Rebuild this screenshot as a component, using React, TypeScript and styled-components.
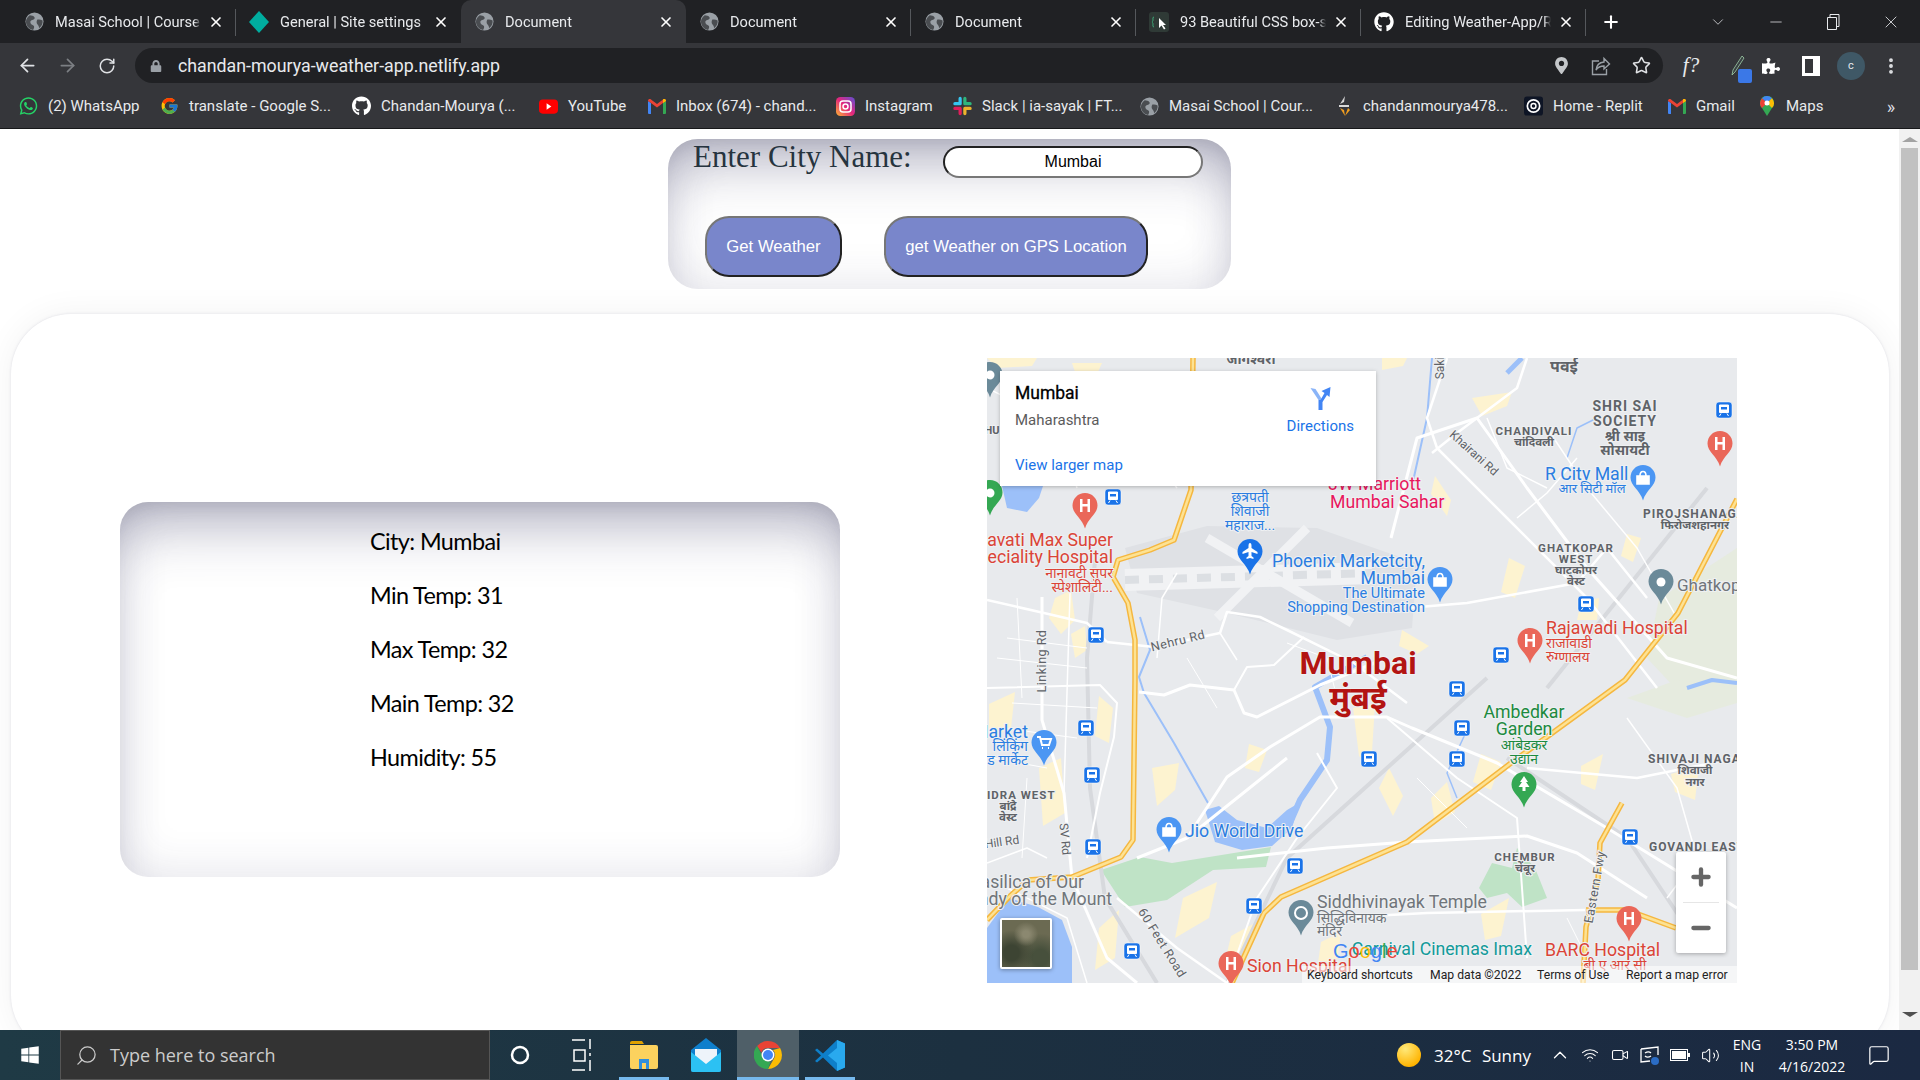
import React from "react";
import styled, { createGlobalStyle } from "styled-components";
import {
  ArrowLeft,
  ArrowRight,
  RotateCw,
  Star,
  Plus,
  X,
  Minus,
  ChevronDown,
  ChevronUp,
  Search,
  MoreVertical,
  Wifi,
  Volume2,
  Video,
  MessageSquare,
} from "lucide-react";
import { FaWhatsapp, FaGithub, FaWindows, FaPuzzlePiece, FaLock, FaMapMarkerAlt } from "react-icons/fa";
import { FcGoogle } from "react-icons/fc";

const GlobalStyle = createGlobalStyle`
  html, body { margin: 0; padding: 0; overflow: hidden; background: #fff; }
  * { box-sizing: border-box; }
`;

const UI_FONT = `Roboto, "Noto Sans", "Liberation Sans", sans-serif`;
const DEVA = `Roboto, "Noto Sans", "Noto Sans Devanagari", "Liberation Sans", sans-serif`;

const Screen = styled.div`
  width: 1920px;
  height: 1080px;
  display: flex;
  flex-direction: column;
  overflow: hidden;
  font-family: ${UI_FONT};
`;

/* browser chrome */
const TabStrip = styled.div`
  height: 43px;
  flex: none;
  background: #202124;
  display: flex;
  align-items: stretch;
  padding-left: 11px;
  color: #e8eaed;
`;

const Tab = styled.div<{ $active?: boolean; $sep?: boolean }>`
  position: relative;
  width: 225px;
  flex: none;
  display: flex;
  align-items: center;
  padding-left: 13px;
  font-size: 14.6px;
  background: ${(p) => (p.$active ? "#35363a" : "transparent")};
  border-radius: ${(p) => (p.$active ? "10px 10px 0 0" : "0")};
  &::after {
    content: "";
    display: ${(p) => (p.$sep ? "block" : "none")};
    position: absolute;
    right: 0;
    top: 9px;
    bottom: 7px;
    width: 1px;
    background: #55585c;
  }
`;

const TabIcon = styled.span`
  width: 20px;
  height: 20px;
  display: flex;
  align-items: center;
  justify-content: center;
  flex: none;
`;

const TabTitle = styled.span`
  margin-left: 11px;
  width: 146px;
  white-space: nowrap;
  overflow: hidden;
  -webkit-mask-image: linear-gradient(to right, #000 95%, transparent);
`;

const TabClose = styled.span`
  margin-left: 7px;
  display: flex;
  color: #fff;
`;

const NewTab = styled.span`
  margin-left: 15px;
  display: flex;
  align-items: center;
  color: #fff;
`;

const WindowControls = styled.div`
  margin-left: auto;
  display: flex;
  align-items: center;
  color: #e8eaed;
`;

const WinButton = styled.span<{ $w: number }>`
  width: ${(p) => p.$w}px;
  display: flex;
  justify-content: center;
`;

const Toolbar = styled.div`
  height: 41px;
  flex: none;
  background: #35363a;
  display: flex;
  align-items: center;
  padding: 4px 0 0 7px;
  color: #dadce0;
`;

const NavButton = styled.span<{ $w?: number; $dim?: boolean }>`
  width: ${(p) => p.$w ?? 40}px;
  flex: none;
  display: flex;
  justify-content: center;
  align-items: center;
  color: ${(p) => (p.$dim ? "#7c7f83" : "#e0e2e5")};
`;

const Omnibox = styled.div`
  width: 1528px;
  height: 35px;
  margin-left: 8px;
  flex: none;
  border-radius: 18px;
  background: #202124;
  display: flex;
  align-items: center;
  padding: 0 2px 0 15px;
  color: #9aa0a6;
`;

const UrlText = styled.span`
  margin-left: 16px;
  font-size: 17.8px;
  color: #e8eaed;
`;

const OmniActions = styled.div`
  margin-left: auto;
  display: flex;
  color: #c4c7ca;
`;

const Avatar = styled.span`
  width: 28px;
  height: 28px;
  border-radius: 50%;
  background: #3f5866;
  color: #e8eaed;
  font-size: 11px;
  display: flex;
  align-items: center;
  justify-content: center;
`;

const FxMark = styled.span`
  font-family: "Liberation Serif", serif;
  font-style: italic;
  font-size: 21px;
  color: #e8eaed;
`;

const ExtBadge = styled.span`
  position: relative;
  display: flex;
  &::after {
    content: "";
    position: absolute;
    left: 9px;
    bottom: -7px;
    width: 14px;
    height: 14px;
    border-radius: 2px;
    background: #3b78e7;
  }
`;

const BookmarkBar = styled.div`
  height: 45px;
  flex: none;
  background: #35363a;
  border-bottom: 1px solid #17181a;
  display: flex;
  align-items: center;
  padding-left: 19px;
  font-size: 15px;
  color: #e8eaed;
`;

const Bookmark = styled.div<{ $w: number }>`
  width: ${(p) => p.$w}px;
  flex: none;
  display: flex;
  align-items: center;
  gap: 10px;
  white-space: nowrap;
`;

const BookmarkIcon = styled.span`
  width: 19px;
  height: 20px;
  display: flex;
  align-items: center;
  justify-content: center;
  flex: none;
`;

const MoreBookmarks = styled.span`
  margin-left: auto;
  width: 66px;
  padding-left: 8px;
  text-align: center;
  font-size: 18px;
  color: #dadce0;
`;

/* page */
const Viewport = styled.div`
  flex: 1;
  min-height: 0;
  display: flex;
`;

const Page = styled.main`
  flex: 1;
  overflow: hidden;
  background: #fff;
  padding-top: 10px;
`;

const Scrollbar = styled.div`
  width: 21px;
  flex: none;
  background: #f1f1f1;
  display: flex;
  flex-direction: column;
  align-items: center;
  padding-top: 8px;
`;

const ScrollThumb = styled.div`
  width: 17px;
  height: 822px;
  margin: 6px 0 42px;
  background: #c1c1c1;
`;

const ScrollArrow = styled.div<{ $down?: boolean }>`
  width: 0;
  height: 0;
  border-left: 8px solid transparent;
  border-right: 8px solid transparent;
  ${(p) => (p.$down ? "border-top: 5px solid #505050;" : "border-bottom: 5px solid #a3a3a3;")}
`;

const InsetShadow = `
  box-shadow: inset 0 46px 56px -20px rgba(50, 50, 93, 0.3),
    inset 0 14px 22px -14px rgba(0, 0, 0, 0.12),
    inset 0 0 48px rgba(50, 50, 93, 0.15);
`;

const FormCard = styled.form`
  width: 563px;
  height: 150px;
  margin: 0 auto;
  border-radius: 30px;
  ${InsetShadow}
  padding: 7px 28px 0 25px;
`;

const CityRow = styled.div`
  display: flex;
  align-items: flex-start;
`;

const CityLabel = styled.label`
  font-family: "Liberation Serif", serif;
  font-size: 31px;
  line-height: 36px;
  margin-top: -7px;
  color: #26343f;
`;

const CityInput = styled.input`
  margin-left: auto;
  width: 260px;
  height: 32px;
  border-radius: 16px;
  border: 2px solid;
  border-color: #222 #777 #777 #222;
  background: #fff;
  text-align: center;
  font-family: "Liberation Sans", sans-serif;
  font-size: 16px;
  color: #000;
  outline: none;
`;

const ButtonRow = styled.div`
  display: flex;
  gap: 42px;
  margin-top: 38px;
  padding-left: 12px;
`;

const ActionButton = styled.button<{ $w: number }>`
  width: ${(p) => p.$w}px;
  height: 61px;
  border-radius: 24px;
  border: 2px solid;
  border-color: #767676 #222 #222 #767676;
  background: #7986cb;
  color: #fff;
  font-family: "Liberation Sans", sans-serif;
  font-size: 16.7px;
  padding: 0;
`;

const MainCard = styled.section`
  width: 1878px;
  height: 741px;
  margin: 25px 0 0 11px;
  border-radius: 60px;
  background: #fff;
  box-shadow: 0 0 34px rgba(0, 0, 0, 0.055), 0 0 3px rgba(50, 50, 93, 0.13);
  display: flex;
  align-items: flex-start;
  gap: 147px;
  padding: 44px 0 0 109px;
`;

const WeatherCard = styled.div`
  width: 720px;
  height: 375px;
  margin-top: 144px;
  border-radius: 28px;
  ${InsetShadow}
  padding: 13px 0 0 250px;
`;

const WeatherRow = styled.p`
  margin: 0;
  height: 54px;
  line-height: 52px;
  font-family: Lato, "Open Sans", sans-serif;
  font-size: 23.4px;
  letter-spacing: -0.6px;
  color: #000;
`;

/* map */
const MapFrame = styled.div`
  position: relative;
  width: 750px;
  height: 625px;
  flex: none;
  overflow: hidden;
  background: #e8eaed;
  font-family: Roboto, sans-serif;
`;

const MapSvg = styled.svg`
  display: block;
`;

const InfoCard = styled.div`
  position: absolute;
  left: 13px;
  top: 13px;
  width: 376px;
  height: 115px;
  background: #fff;
  padding: 12px 15px;
  box-shadow: 0 1px 4px rgba(0, 0, 0, 0.25);
`;

const InfoTop = styled.div`
  display: flex;
  justify-content: space-between;
  height: 64px;
`;

const InfoName = styled.div`
  font-size: 17.5px;
  font-weight: 400;
  -webkit-text-stroke: 0.3px #000;
  line-height: 20px;
  color: #000;
`;

const InfoRegion = styled.div`
  font-size: 15px;
  margin-top: 8px;
  color: #5b5b5b;
`;

const DirectionsLink = styled.a`
  display: flex;
  flex-direction: column;
  align-items: center;
  font-size: 15px;
  color: #1a73e8;
  gap: 6px;
  margin-right: 7px;
  margin-top: 4px;
`;

const LargerMapLink = styled.a`
  display: block;
  margin-top: 9px;
  font-size: 15px;
  color: #1a73e8;
`;

const ZoomControl = styled.div`
  position: absolute;
  left: 689px;
  top: 494px;
  width: 50px;
  height: 101px;
  background: #fff;
  border-radius: 2px;
  box-shadow: 0 1px 4px rgba(0, 0, 0, 0.3);
  display: flex;
  flex-direction: column;
  color: #666;
`;

const ZoomButton = styled.span`
  flex: 1;
  display: flex;
  align-items: center;
  justify-content: center;
`;

const ZoomDivider = styled.span`
  height: 1px;
  margin: 0 7px;
  background: #e6e6e6;
`;

const SatelliteTile = styled.div`
  position: absolute;
  left: 13px;
  top: 560px;
  width: 52px;
  height: 51px;
  border: 2px solid #fff;
  border-radius: 2px;
  box-shadow: 0 1px 4px rgba(0, 0, 0, 0.35);
  overflow: hidden;
  background: radial-gradient(circle at 50% 30%, #8b8870 0 8%, transparent 30%),
    radial-gradient(circle at 20% 70%, #3d4433 0 15%, transparent 45%),
    radial-gradient(circle at 80% 80%, #47503c 0 15%, transparent 45%),
    #6b6a52;
`;

const Attribution = styled.div`
  position: absolute;
  right: 0;
  bottom: 0;
  height: 17px;
  width: 435px;
  display: flex;
  align-items: center;
  background: rgba(255, 255, 255, 0.55);
  font-size: 12.2px;
  color: #222;
  white-space: nowrap;
`;

const AttributionItem = styled.span<{ $w: number }>`
  width: ${(p) => p.$w}px;
  padding-left: 5px;
  flex: none;
`;

const MapLabel = styled.text<{ $color: string; $size: number; $bold?: boolean }>`
  font-family: ${DEVA};
  font-size: ${(p) => p.$size}px;
  font-weight: ${(p) => (p.$bold ? 700 : 400)};
  fill: ${(p) => p.$color};
  stroke: #eef0f2;
  stroke-width: 2.2px;
  paint-order: stroke;
`;

const GoogleMark = styled.text`
  font-family: "Liberation Sans", sans-serif;
  font-size: 20px;
  font-weight: 400;
`;

/* taskbar */
const Taskbar = styled.footer`
  height: 50px;
  flex: none;
  display: flex;
  align-items: stretch;
  background: linear-gradient(to right, #1f3a45, #1c3040 50%, #1b2942);
  color: #fff;
`;

const StartButton = styled.span`
  width: 60px;
  flex: none;
  display: flex;
  align-items: center;
  justify-content: center;
`;

const SearchBox = styled.div`
  width: 430px;
  flex: none;
  background: #333;
  border: 1px solid #555;
  display: flex;
  align-items: center;
  padding-left: 14px;
  gap: 12px;
  font-family: "Open Sans", sans-serif;
  font-size: 18px;
  color: #ccc;
`;

const TaskSlot = styled.span<{ $w?: number; $open?: boolean; $current?: boolean }>`
  position: relative;
  width: ${(p) => p.$w ?? 62}px;
  flex: none;
  display: flex;
  align-items: center;
  justify-content: center;
  background: ${(p) => (p.$current ? "#4f5f68" : "transparent")};
  &::after {
    content: "";
    display: ${(p) => (p.$open ? "block" : "none")};
    position: absolute;
    bottom: 0;
    left: ${(p) => (p.$current ? "0" : "6px")};
    right: ${(p) => (p.$current ? "0" : "6px")};
    height: 3px;
    background: #76b9ed;
  }
`;

const Tray = styled.div`
  margin-left: auto;
  display: flex;
  align-items: center;
  padding-right: 22px;
  font-family: "Open Sans", sans-serif;
`;

const Sun = styled.span`
  width: 24px;
  height: 24px;
  border-radius: 50%;
  background: radial-gradient(circle at 35% 25%, #ffe97a, #ffb300 75%);
`;

const WeatherText = styled.span`
  margin: 0 14px 0 13px;
  font-size: 17px;
  word-spacing: 6px;
  color: #fff;
`;

const TrayIcon = styled.span<{ $w?: number }>`
  width: ${(p) => p.$w ?? 30}px;
  display: flex;
  justify-content: center;
  color: #fff;
`;

const TrayText = styled.span<{ $w: number; $gap?: number }>`
  width: ${(p) => p.$w}px;
  margin-left: ${(p) => p.$gap ?? 0}px;
  display: flex;
  flex-direction: column;
  align-items: center;
  gap: 3px;
  font-size: 14px;
  line-height: 19px;
  color: #fff;
`;

const GlobeIcon: React.FC = () => (
  <svg width="19" height="19" viewBox="0 0 20 20">
    <circle cx="10" cy="10" r="9.5" fill="#9aa0a6" />
    <path d="M5 3.5c2 .5 4 .5 5 2s-1 2.5-2.5 3S5 10 6 12s3 1.5 3.5 3-.5 3-1 4C4 18 1 14.500 1 10c0-2.500 2-5 4-6.500zM13 8c2-.5 4 0 5.500 1 .5 3-1 6-3.500 8-.5-2-1-3-2-4s-1-3.500 0-5z" fill="#4a4d51" />
  </svg>
);

const DiamondIcon: React.FC = () => (
  <svg width="20" height="22" viewBox="0 0 20 22">
    <path d="M10 0l10 11-10 11L0 11z" fill="#00ad9f" />
  </svg>
);

const CssIcon: React.FC = () => (
  <svg width="20" height="20" viewBox="0 0 20 20">
    <rect width="20" height="20" rx="3" fill="#2f3a36" />
    <path d="M5 5c-1.500 0-1 2-1 3s-1 2-1 2 1 1 1 2-.5 3 1 3" stroke="#3fae7c" fill="none" />
    <path d="M10 6l0 10 2.500-2.500 2.500 4 1.500-1-2.500-3.500h3z" fill="#fff" />
  </svg>
);

const GmailIcon: React.FC = () => (
  <svg width="18" height="15" viewBox="0 0 18 15">
    <path d="M0 2l3 2v11H1a1 1 0 0 1-1-1z" fill="#4285f4" />
    <path d="M18 2l-3 2v11h2a1 1 0 0 0 1-1z" fill="#34a853" />
    <path d="M0 2c0-2 2-2.500 3-1.500L9 5l6-4.500c1-1 3-.5 3 1.500l-3 2-6 4.500L3 4z" fill="#ea4335" />
    <path d="M15 .5c1-1 3-.5 3 1.500l-3 2z" fill="#fbbc04" />
  </svg>
);

const YoutubeIcon: React.FC = () => (
  <svg width="20" height="15" viewBox="0 0 20 15">
    <rect width="20" height="15" rx="4" fill="#f00" />
    <path d="M8 4l5 3.500-5 3.500z" fill="#fff" />
  </svg>
);

const InstagramIcon: React.FC = () => (
  <svg width="19" height="19" viewBox="0 0 19 19">
    <defs>
      <linearGradient id="ig" x1="0" y1="1" x2="1" y2="0">
        <stop offset="0" stopColor="#fdb432" />
        <stop offset=".5" stopColor="#e5267c" />
        <stop offset="1" stopColor="#5b51d8" />
      </linearGradient>
    </defs>
    <rect width="19" height="19" rx="4.500" fill="url(#ig)" />
    <rect x="4" y="4" width="11" height="11" rx="3" fill="none" stroke="#fff" strokeWidth="1.500" />
    <circle cx="9.500" cy="9.500" r="2.500" fill="none" stroke="#fff" strokeWidth="1.500" />
  </svg>
);

const SlackIcon: React.FC = () => (
  <svg width="20" height="20" viewBox="0 0 20 20" strokeWidth="3.400" strokeLinecap="round">
    <path d="M7.500 2v5.500M2 7.500h5" stroke="#36c5f0" />
    <path d="M12.500 2v5.500M18 7.500h-5" stroke="#2eb67d" />
    <path d="M12.500 18v-5.500M18 12.500h-5" stroke="#ecb22e" />
    <path d="M7.500 18v-5.500M2 12.500h5" stroke="#e01e5a" />
  </svg>
);

const ForkIcon: React.FC = () => (
  <svg width="23" height="24" viewBox="0 0 20 24">
    <path d="M8 13v10h4V13z" fill="#4285f4" />
    <path d="M0 1l8 12h4L5 2z" fill="#8ab4f8" />
    <path d="M10 13l4-7-3-2 9-4-1 10-2.500-2L12 15z" fill="#4285f4" />
  </svg>
);

const ShareIcon: React.FC = () => (
  <svg width="20" height="20" viewBox="0 0 20 20" fill="none" stroke="#9aa0a6" strokeWidth="1.400">
    <path d="M8 5H1.500v13.500h14V13" />
    <path d="M5 14c.5-5 3.500-7.500 8-8V2.500l5.500 5.500-5.500 5V10c-3.500 0-6 1-8 4z" />
  </svg>
);

const ReplitIcon: React.FC = () => (
  <svg width="20" height="20" viewBox="0 0 20 20">
    <rect width="20" height="20" rx="3" fill="#0e1525" />
    <circle cx="10" cy="10" r="6.500" fill="none" stroke="#fff" strokeWidth="1.800" />
    <circle cx="10" cy="10" r="2.600" fill="none" stroke="#fff" strokeWidth="1.500" />
  </svg>
);

const GitIcon: React.FC = () => (
  <svg width="14" height="20" viewBox="0 0 14 20">
    <path d="M8 0L3 8l4-2z" fill="#d9d9d9" />
    <path d="M2 9h10v2H2z" fill="#d9d9d9" />
    <path d="M3 12l5 8-1-6z" fill="#f29e1f" />
    <path d="M11 12l-3 8 5-6z" fill="#f29e1f" />
  </svg>
);

const MapsIcon: React.FC = () => (
  <svg width="14" height="20" viewBox="0 0 14 20">
    <path d="M7 0a7 7 0 0 1 5 12L7 20 2 12A7 7 0 0 1 7 0z" fill="#34a853" />
    <path d="M2 2.200A7 7 0 0 1 7 0a7 7 0 0 1 5 2.200L7 7z" fill="#4285f4" />
    <path d="M12 2.200A7 7 0 0 1 12 12L7 7z" fill="#fbbc04" />
    <path d="M2 12a7 7 0 0 1 0-9.800L7 7z" fill="#ea4335" />
    <circle cx="7" cy="7" r="2.500" fill="#fff" />
  </svg>
);

const ChromeIcon: React.FC = () => (
  <svg width="28" height="28" viewBox="0 0 28 28">
    <path d="M14 0a14 14 0 0 1 12.100 7H14a7 7 0 0 0-6.600 4.600L3.100 5A14 14 0 0 1 14 0z" fill="#ea4335" />
    <path d="M26.100 7A14 14 0 0 1 14 28l6-10.500A7 7 0 0 0 19 9z" fill="#fbbc04" />
    <path d="M14 28A14 14 0 0 1 3.100 5l5.500 10.500a7 7 0 0 0 8 5z" fill="#34a853" />
    <circle cx="14" cy="14" r="6.500" fill="#fff" />
    <circle cx="14" cy="14" r="5" fill="#4285f4" />
  </svg>
);

const VsCodeIcon: React.FC = () => (
  <svg width="30" height="31" viewBox="0 0 30 31">
    <path d="M22 0l8 3.500v24L22 31 8 17.500 2 22.500 0 21l6-5.500L0 10l2-1.500 6 5z" fill="#0e7fc9" />
    <path d="M22 0l8 3.500v24L22 31zM22 8l-9 7.500 9 7.500z" fill="#29a9ee" fillRule="evenodd" />
  </svg>
);

const ExplorerIcon: React.FC = () => (
  <svg width="28" height="28" viewBox="0 0 28 28">
    <path d="M0 2a2 2 0 0 1 2-2h10l2 3H0z" fill="#e0a100" />
    <path d="M0 4h26a2 2 0 0 1 2 2v20a2 2 0 0 1-2 2H2a2 2 0 0 1-2-2z" fill="#fcd25e" />
    <path d="M9 28V18h10v10h-3v-6h-4v6z" fill="#2f8fdc" />
  </svg>
);

const MailIcon: React.FC = () => (
  <svg width="30" height="34" viewBox="0 0 30 34">
    <path d="M15 0l15 12v20a2 2 0 0 1-2 2H2a2 2 0 0 1-2-2V12z" fill="#0f7fcc" />
    <path d="M4 11h22v8l-11 8-11-8z" fill="#eef4fa" />
    <path d="M0 14l15 12 15-12v18a2 2 0 0 1-2 2H2a2 2 0 0 1-2-2z" fill="#2cc1f3" />
  </svg>
);

const TaskViewIcon: React.FC = () => (
  <svg width="20" height="34" viewBox="0 0 20 34" fill="none" stroke="#fff" strokeWidth="1.500">
    <path d="M0 2h13M0 32h13M2 12h11v11H2zM18 1v10M18 15v3M18 22v11" />
  </svg>
);

const CastIcon: React.FC = () => (
  <svg width="20" height="20" viewBox="0 0 20 20" fill="none" stroke="#fff" strokeWidth="1.300">
    <path d="M1 4l17-2v8M1 4v13l9-1" />
    <path d="M5 8c3-2 5-1 6 0M11 11c-3 2-5 1-6 0" />
    <circle cx="15" cy="16" r="4" fill="#2b6cc4" stroke="none" />
  </svg>
);

const BatteryIcon: React.FC = () => (
  <svg width="20" height="12" viewBox="0 0 20 12">
    <rect x=".5" y=".5" width="17" height="11" fill="none" stroke="#fff" />
    <rect x="2" y="2" width="14" height="8" fill="#fff" />
    <rect x="18" y="4" width="2" height="4" fill="#fff" />
  </svg>
);

type TabData = { title: string; icon: React.ReactNode; active?: boolean; sep?: boolean };

const tabs: TabData[] = [
  { title: "Masai School | Course", icon: <GlobeIcon />, sep: true },
  { title: "General | Site settings", icon: <DiamondIcon /> },
  { title: "Document", icon: <GlobeIcon />, active: true },
  { title: "Document", icon: <GlobeIcon />, sep: true },
  { title: "Document", icon: <GlobeIcon />, sep: true },
  { title: "93 Beautiful CSS box-shadow", icon: <CssIcon />, sep: true },
  { title: "Editing Weather-App/README", icon: <FaGithub size={20} color="#fff" />, sep: true },
];

const bookmarks: { label: string; w: number; icon: React.ReactNode }[] = [
  { label: "(2) WhatsApp", w: 141, icon: <FaWhatsapp size={20} color="#25d366" /> },
  { label: "translate - Google S...", w: 192, icon: <FcGoogle size={20} /> },
  { label: "Chandan-Mourya (...", w: 187, icon: <FaGithub size={20} color="#fff" /> },
  { label: "YouTube", w: 108, icon: <YoutubeIcon /> },
  { label: "Inbox (674) - chand...", w: 189, icon: <GmailIcon /> },
  { label: "Instagram", w: 117, icon: <InstagramIcon /> },
  { label: "Slack | ia-sayak | FT...", w: 187, icon: <SlackIcon /> },
  { label: "Masai School | Cour...", w: 194, icon: <GlobeIcon /> },
  { label: "chandanmourya478...", w: 190, icon: <GitIcon /> },
  { label: "Home - Replit", w: 143, icon: <ReplitIcon /> },
  { label: "Gmail", w: 90, icon: <GmailIcon /> },
  { label: "Maps", w: 80, icon: <MapsIcon /> },
];

const weatherRows = ["City: Mumbai", "Min Temp: 31", "Max Temp: 32", "Main Temp: 32", "Humidity: 55"];

/* map data, all in the 750x625 space of the frame */
const WATER = "#9cc0f9";
const GREEN = "#bfe3c6";
const SAND = "#fdf3d0";

const areas: { fill: string; pts: string }[] = [
  { fill: "#dfe1e5", pts: "138,190 220,168 330,170 430,205 425,270 350,282 240,255 150,235" },
  { fill: WATER, pts: "0,570 22,540 51,549 75,562 85,589 85,625 0,625" },
  { fill: WATER, pts: "15,128 56,128 52,140 40,154 20,150" },
  { fill: WATER, pts: "218,452 232,448 250,462 280,470 300,452 312,445 305,470 285,488 255,492 228,484" },
  { fill: GREEN, pts: "114,512 153,499 185,505 284,489 279,509 226,512 180,542 138,549" },
  { fill: GREEN, pts: "492,530 505,505 525,510 530,490 548,510 560,540 535,549 520,535 500,540" },
  { fill: "#e6ebdf", pts: "672,241 750,190 750,332 690,332 660,300" },
  { fill: "#e6ebdf", pts: "640,340 690,322 750,330 750,345 700,360" },
  { fill: SAND, pts: "0,0 50,0 45,8 10,10" },
  { fill: SAND, pts: "85,5 115,5 110,16 90,20" },
  { fill: SAND, pts: "395,0 420,0 416,8 395,12" },
  { fill: SAND, pts: "485,40 525,34 520,48 495,58" },
  { fill: SAND, pts: "448,118 464,142 460,158 444,136" },
  { fill: SAND, pts: "522,200 538,208 528,240 514,234" },
  { fill: SAND, pts: "594,244 612,240 610,262 590,262" },
  { fill: SAND, pts: "640,176 654,180 646,204 634,198" },
  { fill: SAND, pts: "415,272 442,288 430,296 412,288" },
  { fill: SAND, pts: "68,240 84,232 88,262 74,276 62,260" },
  { fill: SAND, pts: "84,276 98,268 100,292 88,300" },
  { fill: SAND, pts: "2,346 28,334 24,370 2,380" },
  { fill: SAND, pts: "112,338 126,350 122,385 108,378" },
  { fill: SAND, pts: "52,410 74,400 78,455 56,468" },
  { fill: SAND, pts: "165,410 192,405 188,432 170,448" },
  { fill: SAND, pts: "262,386 280,392 272,414 258,410" },
  { fill: SAND, pts: "366,350 388,346 384,410 372,398" },
  { fill: SAND, pts: "402,410 416,438 406,458 392,430" },
  { fill: SAND, pts: "444,440 460,424 468,454 448,466" },
  { fill: SAND, pts: "494,396 514,404 504,432 486,424" },
  { fill: SAND, pts: "684,416 712,408 708,442 688,434" },
  { fill: SAND, pts: "196,540 230,524 222,560 188,580" },
  { fill: SAND, pts: "112,570 132,552 128,600 108,612" },
  { fill: SAND, pts: "244,578 266,566 258,602 236,612" },
  { fill: SAND, pts: "494,556 522,540 514,578 498,582" },
  { fill: SAND, pts: "594,408 616,396 608,432 594,426" },
  { fill: SAND, pts: "334,584 354,574 350,604 330,612" },
];

const streams: { d: string; w: number }[] = [
  { d: "M153 259L163 292L152 319L157 335L187 385L221 445", w: 2 },
  { d: "M380 299L328 329L343 369L340 402L313 442L303 465", w: 6 },
  { d: "M445 0L440 60L425 128", w: 2 },
  { d: "M535 0L520 15", w: 5 },
  { d: "M700 330L725 322L750 325", w: 4 },
  { d: "M610 60L590 70L580 100", w: 1.500 },
  { d: "M480 372L460 415L470 440", w: 1.500 },
];

const roads: { d: string; w: number }[] = [
  { d: "M120 284L167 289L233 275L240 254L273 259L300 272L367 305L420 345", w: 2.500 },
  { d: "M0 330L113 327L130 345L127 379L113 435L100 500", w: 2 },
  { d: "M152 334L177 337L203 327L247 332L257 355L270 359L333 327L400 300", w: 3 },
  { d: "M247 332L260 309L287 307L317 279", w: 2 },
  { d: "M233 275L250 302", w: 1.500 },
  { d: "M200 480L240 419L283 389L333 359L400 359L425 370L510 405L620 470L750 550", w: 3 },
  { d: "M55 239L55 362L77 435L85 520L120 600L150 625", w: 3 },
  { d: "M0 242L57 255L100 265L120 284", w: 2.500 },
  { d: "M83 235L77 435", w: 1.500 },
  { d: "M404 180L430 80L490 60L540 130L600 210L680 300L750 320", w: 3 },
  { d: "M460 0L440 60L450 90L520 160L600 240L670 330", w: 2.500 },
  { d: "M540 0L530 30L470 75L445 95", w: 2.500 },
  { d: "M420 250L480 245L590 225L620 190L660 240", w: 2.500 },
  { d: "M330 395L350 430L310 480L270 540L240 625", w: 2 },
  { d: "M420 484L540 478L590 495L660 540", w: 3 },
  { d: "M400 360L470 420L530 460L540 600", w: 2 },
  { d: "M150 500L200 480L250 440L300 400", w: 3 },
  { d: "M130 540L190 590L240 625", w: 2.500 },
  { d: "M250 500L340 490L420 484", w: 3 },
  { d: "M345 560L440 555L598 552", w: 2.500 },
  { d: "M540 410L650 420L750 400", w: 2.500 },
  { d: "M560 70L600 130L650 190L690 260", w: 1.500 },
  { d: "M30 240L35 340M20 280L100 290M10 300L100 310M25 345L110 350M15 370L90 380M5 400L60 410M40 420L35 500", w: 1 },
  { d: "M0 505L40 490L60 500M20 530L80 560L100 625", w: 1.500 },
  { d: "M640 360L690 430L710 500L680 540", w: 1.500 },
  { d: "M590 100L560 135L530 160M500 60L520 110L560 130", w: 1.500 },
  { d: "M170 300L175 240L190 215M100 60L160 90L190 130", w: 1.500 },
  { d: "M0 30L60 60L130 40M70 60L90 130", w: 1.500 },
  { d: "M300 285L340 300L350 340M200 300L230 350M430 420L480 470M580 560L600 600", w: 1 },
];

const rails: string[] = [
  "M108 202L100 300L103 430L118 540L170 625",
  "M240 625L300 500L400 410L500 320",
  "M520 400L640 480L700 570",
  "M560 330L720 130",
];

const highways: string[] = [
  "M206 0L204 132L187 182L163 192L131 202L126 219L141 245L148 282L148 322L146 482L134 499L85 519L41 522L22 539L0 562",
  "M245 625L277 555L294 539L420 484L524 405L638 322L691 255L750 141",
  "M635 445L613 485L611 522L599 569L596 625",
  "M599 552L640 552L689 570",
];

const transit: [number, number][] = [
  [737, 52], [126, 139], [599, 246], [514, 297], [109, 277], [470, 331], [99, 370], [105, 417],
  [106, 489], [308, 508], [267, 548], [145, 593], [382, 401], [475, 370], [470, 401], [643, 479],
];

type LabelData = {
  x: number;
  y: number;
  text: string;
  color: string;
  size: number;
  anchor?: "start" | "middle" | "end";
  bold?: boolean;
  rotate?: number;
  spacing?: number;
};

const RED = "#db4437";
const BLUE = "#2a7de1";
const PINK = "#e8175d";
const TEAL = "#129a9a";
const GRN = "#1c8a3f";
const GRAY = "#70757a";
const DARK = "#5f6368";

const labels: LabelData[] = [
  { x: 264, y: 6, text: "जोगेश्वरी", color: DARK, size: 14, anchor: "middle", bold: true },
  { x: 577, y: 14, text: "पवई", color: DARK, size: 16, anchor: "middle", bold: true },
  { x: 638, y: 53, text: "SHRI SAI", color: DARK, size: 14, anchor: "middle", bold: true, spacing: 1 },
  { x: 638, y: 68, text: "SOCIETY", color: DARK, size: 14, anchor: "middle", bold: true, spacing: 1 },
  { x: 638, y: 83, text: "श्री साइ", color: DARK, size: 14, anchor: "middle", bold: true },
  { x: 638, y: 97, text: "सोसायटी", color: DARK, size: 14, anchor: "middle", bold: true },
  { x: 547, y: 77, text: "CHANDIVALI", color: DARK, size: 11.5, anchor: "middle", bold: true, spacing: 1 },
  { x: 547, y: 88, text: "चांदिवली", color: DARK, size: 11.5, anchor: "middle", bold: true },
  { x: 487, y: 99, text: "Khairani Rd", color: DARK, size: 12, anchor: "middle", rotate: 42 },
  { x: 558, y: 122, text: "R City Mall", color: BLUE, size: 17.7 },
  { x: 605, y: 135, text: "आर सिटी मॉल", color: BLUE, size: 13, anchor: "middle" },
  { x: 656, y: 160, text: "PIROJSHANAGAR", color: DARK, size: 12, bold: true, spacing: 1 },
  { x: 708, y: 171, text: "फिरोजशहानगर", color: DARK, size: 11.5, anchor: "middle", bold: true },
  { x: 589, y: 194, text: "GHATKOPAR", color: DARK, size: 11.5, anchor: "middle", bold: true, spacing: 1 },
  { x: 589, y: 205, text: "WEST", color: DARK, size: 11.5, anchor: "middle", bold: true, spacing: 1 },
  { x: 589, y: 216, text: "घाटकोपर", color: DARK, size: 11.5, anchor: "middle", bold: true },
  { x: 589, y: 227, text: "वेस्ट", color: DARK, size: 11.5, anchor: "middle", bold: true },
  { x: 690, y: 233, text: "Ghatkopar", color: GRAY, size: 17 },
  { x: 559, y: 276, text: "Rajawadi Hospital", color: RED, size: 17.7 },
  { x: 559, y: 290, text: "राजावाडी", color: RED, size: 14 },
  { x: 559, y: 304, text: "रुग्णालय", color: RED, size: 14 },
  { x: 434, y: 132, text: "JW Marriott", color: PINK, size: 17.7, anchor: "end" },
  { x: 343, y: 150, text: "Mumbai Sahar", color: PINK, size: 17.7 },
  { x: 263, y: 144, text: "छत्रपती", color: BLUE, size: 14, anchor: "middle" },
  { x: 263, y: 158, text: "शिवाजी", color: BLUE, size: 14, anchor: "middle" },
  { x: 263, y: 172, text: "महाराज...", color: BLUE, size: 14, anchor: "middle" },
  { x: 438, y: 209, text: "Phoenix Marketcity,", color: BLUE, size: 17.7, anchor: "end" },
  { x: 438, y: 226, text: "Mumbai", color: BLUE, size: 17.7, anchor: "end" },
  { x: 438, y: 240, text: "The Ultimate", color: BLUE, size: 14.5, anchor: "end" },
  { x: 438, y: 254, text: "Shopping Destination", color: BLUE, size: 14.5, anchor: "end" },
  { x: 126, y: 188, text: "Nanavati Max Super", color: RED, size: 17.7, anchor: "end" },
  { x: 126, y: 205, text: "Speciality Hospital", color: RED, size: 17.7, anchor: "end" },
  { x: 126, y: 220, text: "नानावटी सुपर", color: RED, size: 14, anchor: "end" },
  { x: 126, y: 234, text: "स्पेशालिटी...", color: RED, size: 14, anchor: "end" },
  { x: 191, y: 287, text: "Nehru Rd", color: DARK, size: 12.5, anchor: "middle", rotate: -14, spacing: 0.5 },
  { x: 55, y: 307, text: "Linking Rd", color: DARK, size: 12.5, anchor: "middle", rotate: -90, spacing: 0.5 },
  { x: 453, y: 14, text: "Saki", color: DARK, size: 12, anchor: "middle", rotate: -90 },
  { x: 5, y: 76, text: "HU", color: DARK, size: 11, anchor: "middle", bold: true },
  { x: 41, y: 380, text: "Market", color: BLUE, size: 17.7, anchor: "end" },
  { x: 41, y: 393, text: "लिंकिंग", color: BLUE, size: 14, anchor: "end" },
  { x: 41, y: 407, text: "रोड मार्केट", color: BLUE, size: 14, anchor: "end" },
  { x: 0, y: 441, text: "IDRA WEST", color: DARK, size: 11.5, bold: true, spacing: 1 },
  { x: 21, y: 452, text: "बांद्रे", color: DARK, size: 11.5, anchor: "middle", bold: true },
  { x: 21, y: 463, text: "वेस्ट", color: DARK, size: 11.5, anchor: "middle", bold: true },
  { x: 15, y: 488, text: "Hill Rd", color: DARK, size: 12, anchor: "middle", rotate: -8 },
  { x: 78, y: 485, text: "SV Rd", color: DARK, size: 12, anchor: "middle", rotate: 85 },
  { x: 198, y: 479, text: "Jio World Drive", color: BLUE, size: 17.7 },
  { x: 97, y: 530, text: "Basilica of Our", color: GRAY, size: 17.7, anchor: "end" },
  { x: 125, y: 547, text: "Lady of the Mount", color: GRAY, size: 17.7, anchor: "end" },
  { x: 537, y: 360, text: "Ambedkar", color: GRN, size: 17.7, anchor: "middle" },
  { x: 537, y: 377, text: "Garden", color: GRN, size: 17.7, anchor: "middle" },
  { x: 537, y: 392, text: "आंबेडकर", color: GRN, size: 14, anchor: "middle" },
  { x: 537, y: 406, text: "उद्यान", color: GRN, size: 14, anchor: "middle" },
  { x: 661, y: 405, text: "SHIVAJI NAGAR", color: DARK, size: 12, bold: true, spacing: 1 },
  { x: 708, y: 416, text: "शिवाजी", color: DARK, size: 11.5, anchor: "middle", bold: true },
  { x: 708, y: 428, text: "नगर", color: DARK, size: 11.5, anchor: "middle", bold: true },
  { x: 538, y: 503, text: "CHEMBUR", color: DARK, size: 11.5, anchor: "middle", bold: true, spacing: 1 },
  { x: 538, y: 514, text: "चेंबूर", color: DARK, size: 11.5, anchor: "middle", bold: true },
  { x: 662, y: 493, text: "GOVANDI EAST", color: DARK, size: 12, bold: true, spacing: 1 },
  { x: 608, y: 533, text: "Eastern Fwy", color: DARK, size: 12.5, anchor: "middle", rotate: -80, spacing: 0.5 },
  { x: 330, y: 550, text: "Siddhivinayak Temple", color: GRAY, size: 17.7 },
  { x: 330, y: 565, text: "सिद्धिविनायक", color: GRAY, size: 14 },
  { x: 330, y: 578, text: "मंदिर", color: GRAY, size: 14 },
  { x: 175, y: 589, text: "60 Feet Road", color: DARK, size: 12.5, anchor: "middle", rotate: 58, spacing: 0.5 },
  { x: 260, y: 614, text: "Sion Hospital", color: RED, size: 17.7 },
  { x: 545, y: 597, text: "Carnival Cinemas Imax", color: TEAL, size: 17.7, anchor: "end" },
  { x: 558, y: 598, text: "BARC Hospital", color: RED, size: 17.7 },
  { x: 628, y: 612, text: "बी ए आर सी", color: RED, size: 14, anchor: "middle" },
  { x: 371, y: 316, text: "Mumbai", color: "#b31412", size: 32, anchor: "middle", bold: true },
  { x: 371, y: 351, text: "मुंबई", color: "#b31412", size: 32, anchor: "middle", bold: true },
];

const PIN_PATH = "M0-13C-7-13-12.500-7.500-12.500-.5-12.500 8-3 12 0 22.500 3 12 12.500 8 12.500-.5 12.500-7.500 7-13 0-13Z";

type PinData = { x: number; y: number; fill: string; kind: "H" | "bag" | "plane" | "cart" | "tree" | "dot" | "om" };

const pins: PinData[] = [
  { x: 733, y: 86, fill: "#ea6759", kind: "H" },
  { x: 98, y: 148, fill: "#ea6759", kind: "H" },
  { x: 543, y: 283, fill: "#ea6759", kind: "H" },
  { x: 244, y: 606, fill: "#ea6759", kind: "H" },
  { x: 642, y: 561, fill: "#ea6759", kind: "H" },
  { x: 656, y: 120, fill: "#4b96f3", kind: "bag" },
  { x: 453, y: 222, fill: "#4b96f3", kind: "bag" },
  { x: 182, y: 472, fill: "#4b96f3", kind: "bag" },
  { x: 57, y: 385, fill: "#4b96f3", kind: "cart" },
  { x: 263, y: 194, fill: "#1a73e8", kind: "plane" },
  { x: 537, y: 427, fill: "#34a853", kind: "tree" },
  { x: 674, y: 224, fill: "#6b8a99", kind: "dot" },
  { x: 314, y: 555, fill: "#6b8a99", kind: "om" },
  { x: 3, y: 135, fill: "#34a853", kind: "dot" },
  { x: 3, y: 17, fill: "#6b8a99", kind: "dot" },
];

const PinGlyph: React.FC<{ kind: PinData["kind"] }> = ({ kind }) => {
  switch (kind) {
    case "H":
      return <path d="M-5-7h2.500v5h5v-5H5v13H2.500V.5h-5V6H-5z" fill="#fff" />;
    case "bag":
      return (
        <g fill="none" stroke="#fff" strokeWidth="1.600">
          <path d="M-6-2h12v8H-6z" fill="#fff" />
          <path d="M-3-2c0-6 6-6 6 0" />
        </g>
      );
    case "cart":
      return <path d="M-7-6h3l2 8h7l2-6H-3M-2 5h1M4 5h1" fill="none" stroke="#fff" strokeWidth="2" />;
    case "plane":
      return <path d="M0-9c1 0 1.500 1 1.500 3v2l6 4v2l-6-2v4l2 1.500V7L0 6l-3.500 1V5.500l2-1.500V0l-6 2V0l6-4v-2c0-2 .5-3 1.500-3z" fill="#fff" />;
    case "tree":
      return <path d="M0-9l4 6H2l3.500 5H1.500v4h-3V2h-4L-2-3h-2z" fill="#fff" />;
    case "om":
      return <circle r="6" fill="none" stroke="#fff" strokeWidth="2" />;
    default:
      return <circle r="4.500" fill="#fff" />;
  }
};

const MapDrawing: React.FC = () => (
  <MapSvg width="750" height="625" viewBox="0 0 750 625">
    {areas.map((a) => (
      <polygon key={a.pts} points={a.pts} fill={a.fill} />
    ))}
    {streams.map((s) => (
      <path key={s.d} d={s.d} fill="none" stroke={WATER} strokeWidth={s.w} strokeLinejoin="round" />
    ))}
    {rails.map((d) => (
      <path key={d} d={d} fill="none" stroke="#d7d9dd" strokeWidth="4" />
    ))}
    <path d="M138 222L385 215" fill="none" stroke="#f1f2f4" strokeWidth="22" />
    <path d="M138 222L385 215" fill="none" stroke="#dcdfe3" strokeWidth="8" strokeDasharray="14 10" />
    <path d="M220 180L365 265M320 170L230 260" fill="none" stroke="#f1f2f4" strokeWidth="9" />
    {roads.map((r) => (
      <path key={r.d} d={r.d} fill="none" stroke="#fff" strokeWidth={r.w} strokeLinejoin="round" />
    ))}
    {highways.map((d) => (
      <g key={d} fill="none" strokeLinejoin="round">
        <path d={d} stroke="#f5b73f" strokeWidth="5.500" />
        <path d={d} stroke="#fde293" strokeWidth="2.500" />
      </g>
    ))}
    {transit.map(([x, y]) => (
      <g key={`${x}-${y}`} transform={`translate(${x} ${y})`}>
        <rect x="-8" y="-8" width="16" height="16" rx="3" fill="#1a73e8" stroke="#fff" strokeWidth=".5" />
        <path d="M-4.500-5h9v7.500h-9zM-3 3.500l-1.500 2.500M3 3.500l1.500 2.500" fill="#fff" stroke="#fff" />
        <path d="M-3-3h6v2.500h-6z" fill="#1a73e8" />
      </g>
    ))}
    {labels.map((l) => (
      <MapLabel
        key={l.text + l.x}
        x={l.x}
        y={l.y}
        $color={l.color}
        $size={l.size}
        $bold={l.bold}
        textAnchor={l.anchor ?? "start"}
        letterSpacing={l.spacing}
        transform={l.rotate ? `rotate(${l.rotate} ${l.x} ${l.y - 4})` : undefined}
      >
        {l.text}
      </MapLabel>
    ))}
    {pins.map((p) => (
      <g key={`${p.x}-${p.y}`} transform={`translate(${p.x} ${p.y})`}>
        <path d={PIN_PATH} fill={p.fill} />
        <PinGlyph kind={p.kind} />
      </g>
    ))}
    <GoogleMark x="346" y="600">
      <tspan fill="#4285f4">G</tspan>
      <tspan fill="#ea4335">o</tspan>
      <tspan fill="#fbbc04">o</tspan>
      <tspan fill="#4285f4">g</tspan>
      <tspan fill="#34a853">l</tspan>
      <tspan fill="#ea4335">e</tspan>
    </GoogleMark>
  </MapSvg>
);

const App: React.FC = () => {
  return (
    <Screen>
      <GlobalStyle />
      <TabStrip>
        {tabs.map((tab, i) => (
          <Tab key={i} $active={tab.active} $sep={tab.sep}>
            <TabIcon>{tab.icon}</TabIcon>
            <TabTitle>{tab.title}</TabTitle>
            <TabClose>
              <X size={16} strokeWidth={2.5} />
            </TabClose>
          </Tab>
        ))}
        <NewTab>
          <Plus size={20} strokeWidth={2.5} />
        </NewTab>
        <WindowControls>
          <WinButton $w={60}>
            <ChevronDown size={18} strokeWidth={1} />
          </WinButton>
          <WinButton $w={56}>
            <Minus size={18} strokeWidth={1} />
          </WinButton>
          <WinButton $w={58}>
            <svg width="14" height="16" viewBox="0 0 14 16" fill="none" stroke="#e8eaed">
              <path d="M1.500 3.500h9v12h-9zM4 3.500V.5h9v12h-2.500" />
            </svg>
          </WinButton>
          <WinButton $w={58}>
            <X size={20} strokeWidth={1} />
          </WinButton>
        </WindowControls>
      </TabStrip>

      <Toolbar>
        <NavButton>
          <ArrowLeft size={21} />
        </NavButton>
        <NavButton $dim>
          <ArrowRight size={21} />
        </NavButton>
        <NavButton>
          <RotateCw size={18} />
        </NavButton>
        <Omnibox>
          <FaLock size={12} />
          <UrlText>chandan-mourya-weather-app.netlify.app</UrlText>
          <OmniActions>
            <NavButton>
              <FaMapMarkerAlt size={17} color="#c4c7ca" />
            </NavButton>
            <NavButton>
              <ShareIcon />
            </NavButton>
            <NavButton>
              <Star size={19} />
            </NavButton>
          </OmniActions>
        </Omnibox>
        <NavButton $w={56}>
          <FxMark>f?</FxMark>
        </NavButton>
        <NavButton $w={36}>
          <ExtBadge>
            <svg width="16" height="20" viewBox="0 0 16 20">
              <path d="M13 0L4 14l-1 5 3-3L15 2z" fill="#3a3f43" stroke="#9fd0a8" strokeWidth=".8" />
            </svg>
          </ExtBadge>
        </NavButton>
        <NavButton $w={32}>
          <FaPuzzlePiece size={18} color="#fff" />
        </NavButton>
        <NavButton $w={48}>
          <svg width="18" height="20" viewBox="0 0 18 20">
            <path d="M0 0h18v20H0zM3 3v14h8V3z" fill="#fff" fillRule="evenodd" />
          </svg>
        </NavButton>
        <NavButton $w={32}>
          <Avatar>c</Avatar>
        </NavButton>
        <NavButton $w={48}>
          <MoreVertical size={20} strokeWidth={2.6} />
        </NavButton>
      </Toolbar>

      <BookmarkBar>
        {bookmarks.map((b) => (
          <Bookmark key={b.label} $w={b.w}>
            <BookmarkIcon>{b.icon}</BookmarkIcon>
            {b.label}
          </Bookmark>
        ))}
        <MoreBookmarks>»</MoreBookmarks>
      </BookmarkBar>

      <Viewport>
        <Page>
          <FormCard>
            <CityRow>
              <CityLabel>Enter City Name:</CityLabel>
              <CityInput defaultValue="Mumbai" />
            </CityRow>
            <ButtonRow>
              <ActionButton type="button" $w={137}>
                Get Weather
              </ActionButton>
              <ActionButton type="button" $w={264}>
                get Weather on GPS Location
              </ActionButton>
            </ButtonRow>
          </FormCard>

          <MainCard>
            <WeatherCard>
              {weatherRows.map((row) => (
                <WeatherRow key={row}>{row}</WeatherRow>
              ))}
            </WeatherCard>
            <MapFrame>
              <MapDrawing />
              <InfoCard>
                <InfoTop>
                  <div>
                    <InfoName>Mumbai</InfoName>
                    <InfoRegion>Maharashtra</InfoRegion>
                  </div>
                  <DirectionsLink>
                    <ForkIcon />
                    Directions
                  </DirectionsLink>
                </InfoTop>
                <LargerMapLink>View larger map</LargerMapLink>
              </InfoCard>
              <SatelliteTile />
              <ZoomControl>
                <ZoomButton>
                  <Plus size={26} strokeWidth={4} />
                </ZoomButton>
                <ZoomDivider />
                <ZoomButton>
                  <Minus size={26} strokeWidth={4} />
                </ZoomButton>
              </ZoomControl>
              <Attribution>
                <AttributionItem $w={123}>Keyboard shortcuts</AttributionItem>
                <AttributionItem $w={107}>Map data ©2022</AttributionItem>
                <AttributionItem $w={89}>Terms of Use</AttributionItem>
                <AttributionItem $w={116}>Report a map error</AttributionItem>
              </Attribution>
            </MapFrame>
          </MainCard>
        </Page>
        <Scrollbar>
          <ScrollArrow />
          <ScrollThumb />
          <ScrollArrow $down />
        </Scrollbar>
      </Viewport>

      <Taskbar>
        <StartButton>
          <FaWindows size={20} />
        </StartButton>
        <SearchBox>
          <Search size={23} strokeWidth={1.3} style={{ transform: "scaleX(-1)" }} />
          Type here to search
        </SearchBox>
        <TaskSlot $w={60}>
          <svg width="20" height="20" viewBox="0 0 20 20">
            <circle cx="10" cy="10" r="8" fill="none" stroke="#fff" strokeWidth="2.500" />
          </svg>
        </TaskSlot>
        <TaskSlot $w={63}>
          <TaskViewIcon />
        </TaskSlot>
        <TaskSlot $open>
          <ExplorerIcon />
        </TaskSlot>
        <TaskSlot>
          <MailIcon />
        </TaskSlot>
        <TaskSlot $open $current>
          <ChromeIcon />
        </TaskSlot>
        <TaskSlot $open>
          <VsCodeIcon />
        </TaskSlot>
        <Tray>
          <Sun />
          <WeatherText>32°C Sunny</WeatherText>
          <TrayIcon>
            <ChevronUp size={22} strokeWidth={1.4} />
          </TrayIcon>
          <TrayIcon>
            <Wifi size={18} strokeWidth={1.4} />
          </TrayIcon>
          <TrayIcon>
            <Video size={18} strokeWidth={1.4} />
          </TrayIcon>
          <TrayIcon>
            <CastIcon />
          </TrayIcon>
          <TrayIcon>
            <BatteryIcon />
          </TrayIcon>
          <TrayIcon>
            <Volume2 size={19} strokeWidth={1.3} />
          </TrayIcon>
          <TrayText $w={34} $gap={5}>
            <span>ENG</span>
            <span>IN</span>
          </TrayText>
          <TrayText $w={96}>
            <span>3:50 PM</span>
            <span>4/16/2022</span>
          </TrayText>
          <TrayIcon $w={38}>
            <MessageSquare size={22} strokeWidth={1.3} />
          </TrayIcon>
        </Tray>
      </Taskbar>
    </Screen>
  );
};

export default App;
